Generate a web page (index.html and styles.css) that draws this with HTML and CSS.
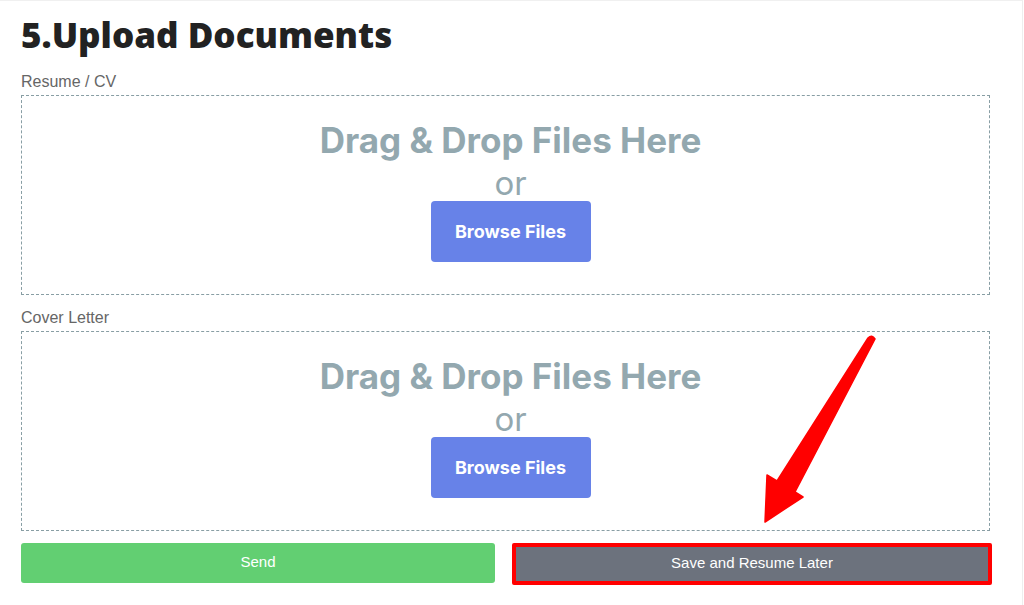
FILE: index.html
```html
<!DOCTYPE html>
<html lang="en">
<head>
    <meta charset="UTF-8">
    <meta name="viewport" content="width=device-width, initial-scale=1.0">
    <title>Upload Documents</title>
    <link rel="stylesheet" href="styles.css">
</head>
<body>
    <div class="page">
        <h1 class="step-title">5.Upload Documents</h1>

        <div class="field">
            <label class="field-label">Resume / CV</label>
            <div class="dropzone">
                <div class="dz-title">Drag &amp; Drop Files Here</div>
                <div class="dz-or">or</div>
                <button type="button" class="browse-btn">Browse Files</button>
            </div>
        </div>

        <div class="field">
            <label class="field-label">Cover Letter</label>
            <div class="dropzone">
                <div class="dz-title">Drag &amp; Drop Files Here</div>
                <div class="dz-or">or</div>
                <button type="button" class="browse-btn">Browse Files</button>
            </div>
        </div>

        <div class="actions">
            <button type="submit" class="btn btn-send">Send</button>
            <button type="button" class="btn btn-save">Save and Resume Later</button>
        </div>

        <!-- annotation arrow pointing at the save button -->
        <svg class="annotation-arrow" width="1024" height="605" viewBox="0 0 1024 605">
            <path d="M868 338 Q872 334 875 339 L795 492 L803 497 L765 522 L767 475 L777 481 Z" fill="#ff0000" stroke="#ff0000" stroke-width="1.5" stroke-linejoin="round"/>
        </svg>
    </div>
</body>
</html>
```

FILE: styles.css
```css
body {
    margin: 0;
    background-color: #fff;
    font-family: "Liberation Sans", Arial, sans-serif;
}

.page {
    position: relative;
    width: 1023px;
    height: 605px;
    box-sizing: border-box;
    padding: 12px 0 0 21px;
    border-top: 1px solid #f0f0f0;
    border-right: 1px solid #eeeeee;
    overflow: hidden;
}

.step-title {
    margin: 0;
    font-family: "Open Sans", sans-serif;
    font-weight: 800;
    font-size: 35px;
    line-height: 44px;
    color: #222;
}

.field {
    width: 969px;
    margin-top: 14px;
}

.field:first-of-type {
    margin-top: 16px;
}

.field-label {
    display: block;
    font-size: 16px;
    line-height: 18px;
    color: #666;
    margin-bottom: 4px;
}

.dropzone {
    height: 200px;
    box-sizing: border-box;
    border: 1px dashed #889ea4;
    display: flex;
    flex-direction: column;
    align-items: center;
    padding: 24px 0 0 10px;
}

.dz-title {
    font-family: Inter, sans-serif;
    font-weight: 700;
    font-size: 35px;
    line-height: 40px;
    color: #93a8af;
}

.dz-or {
    margin-top: 5px;
    font-family: Inter, sans-serif;
    font-size: 33px;
    line-height: 36px;
    color: #93a8af;
}

.browse-btn {
    width: 160px;
    height: 61px;
    border: none;
    border-radius: 4px;
    background-color: #6782e8;
    color: #fff;
    font-family: Inter, sans-serif;
    font-weight: 700;
    font-size: 18px;
    cursor: pointer;
}

.actions {
    display: grid;
    grid-template-columns: 474px 480px;
    column-gap: 17px;
    margin-top: 12px;
}

.btn {
    height: 40px;
    border: none;
    border-radius: 3px;
    color: #fff;
    font-family: "Liberation Sans", Arial, sans-serif;
    font-size: 15px;
    cursor: pointer;
}

.btn-send {
    padding-bottom: 4px;
    background-color: #62cf72;
}

.btn-save {
    height: 42px;
    padding-bottom: 4px;
    background-color: #6c727d;
    border: 4px solid #ff0000;
    border-radius: 2px;
}

.annotation-arrow {
    position: absolute;
    top: -1px;
    left: 0;
    pointer-events: none;
}
```
